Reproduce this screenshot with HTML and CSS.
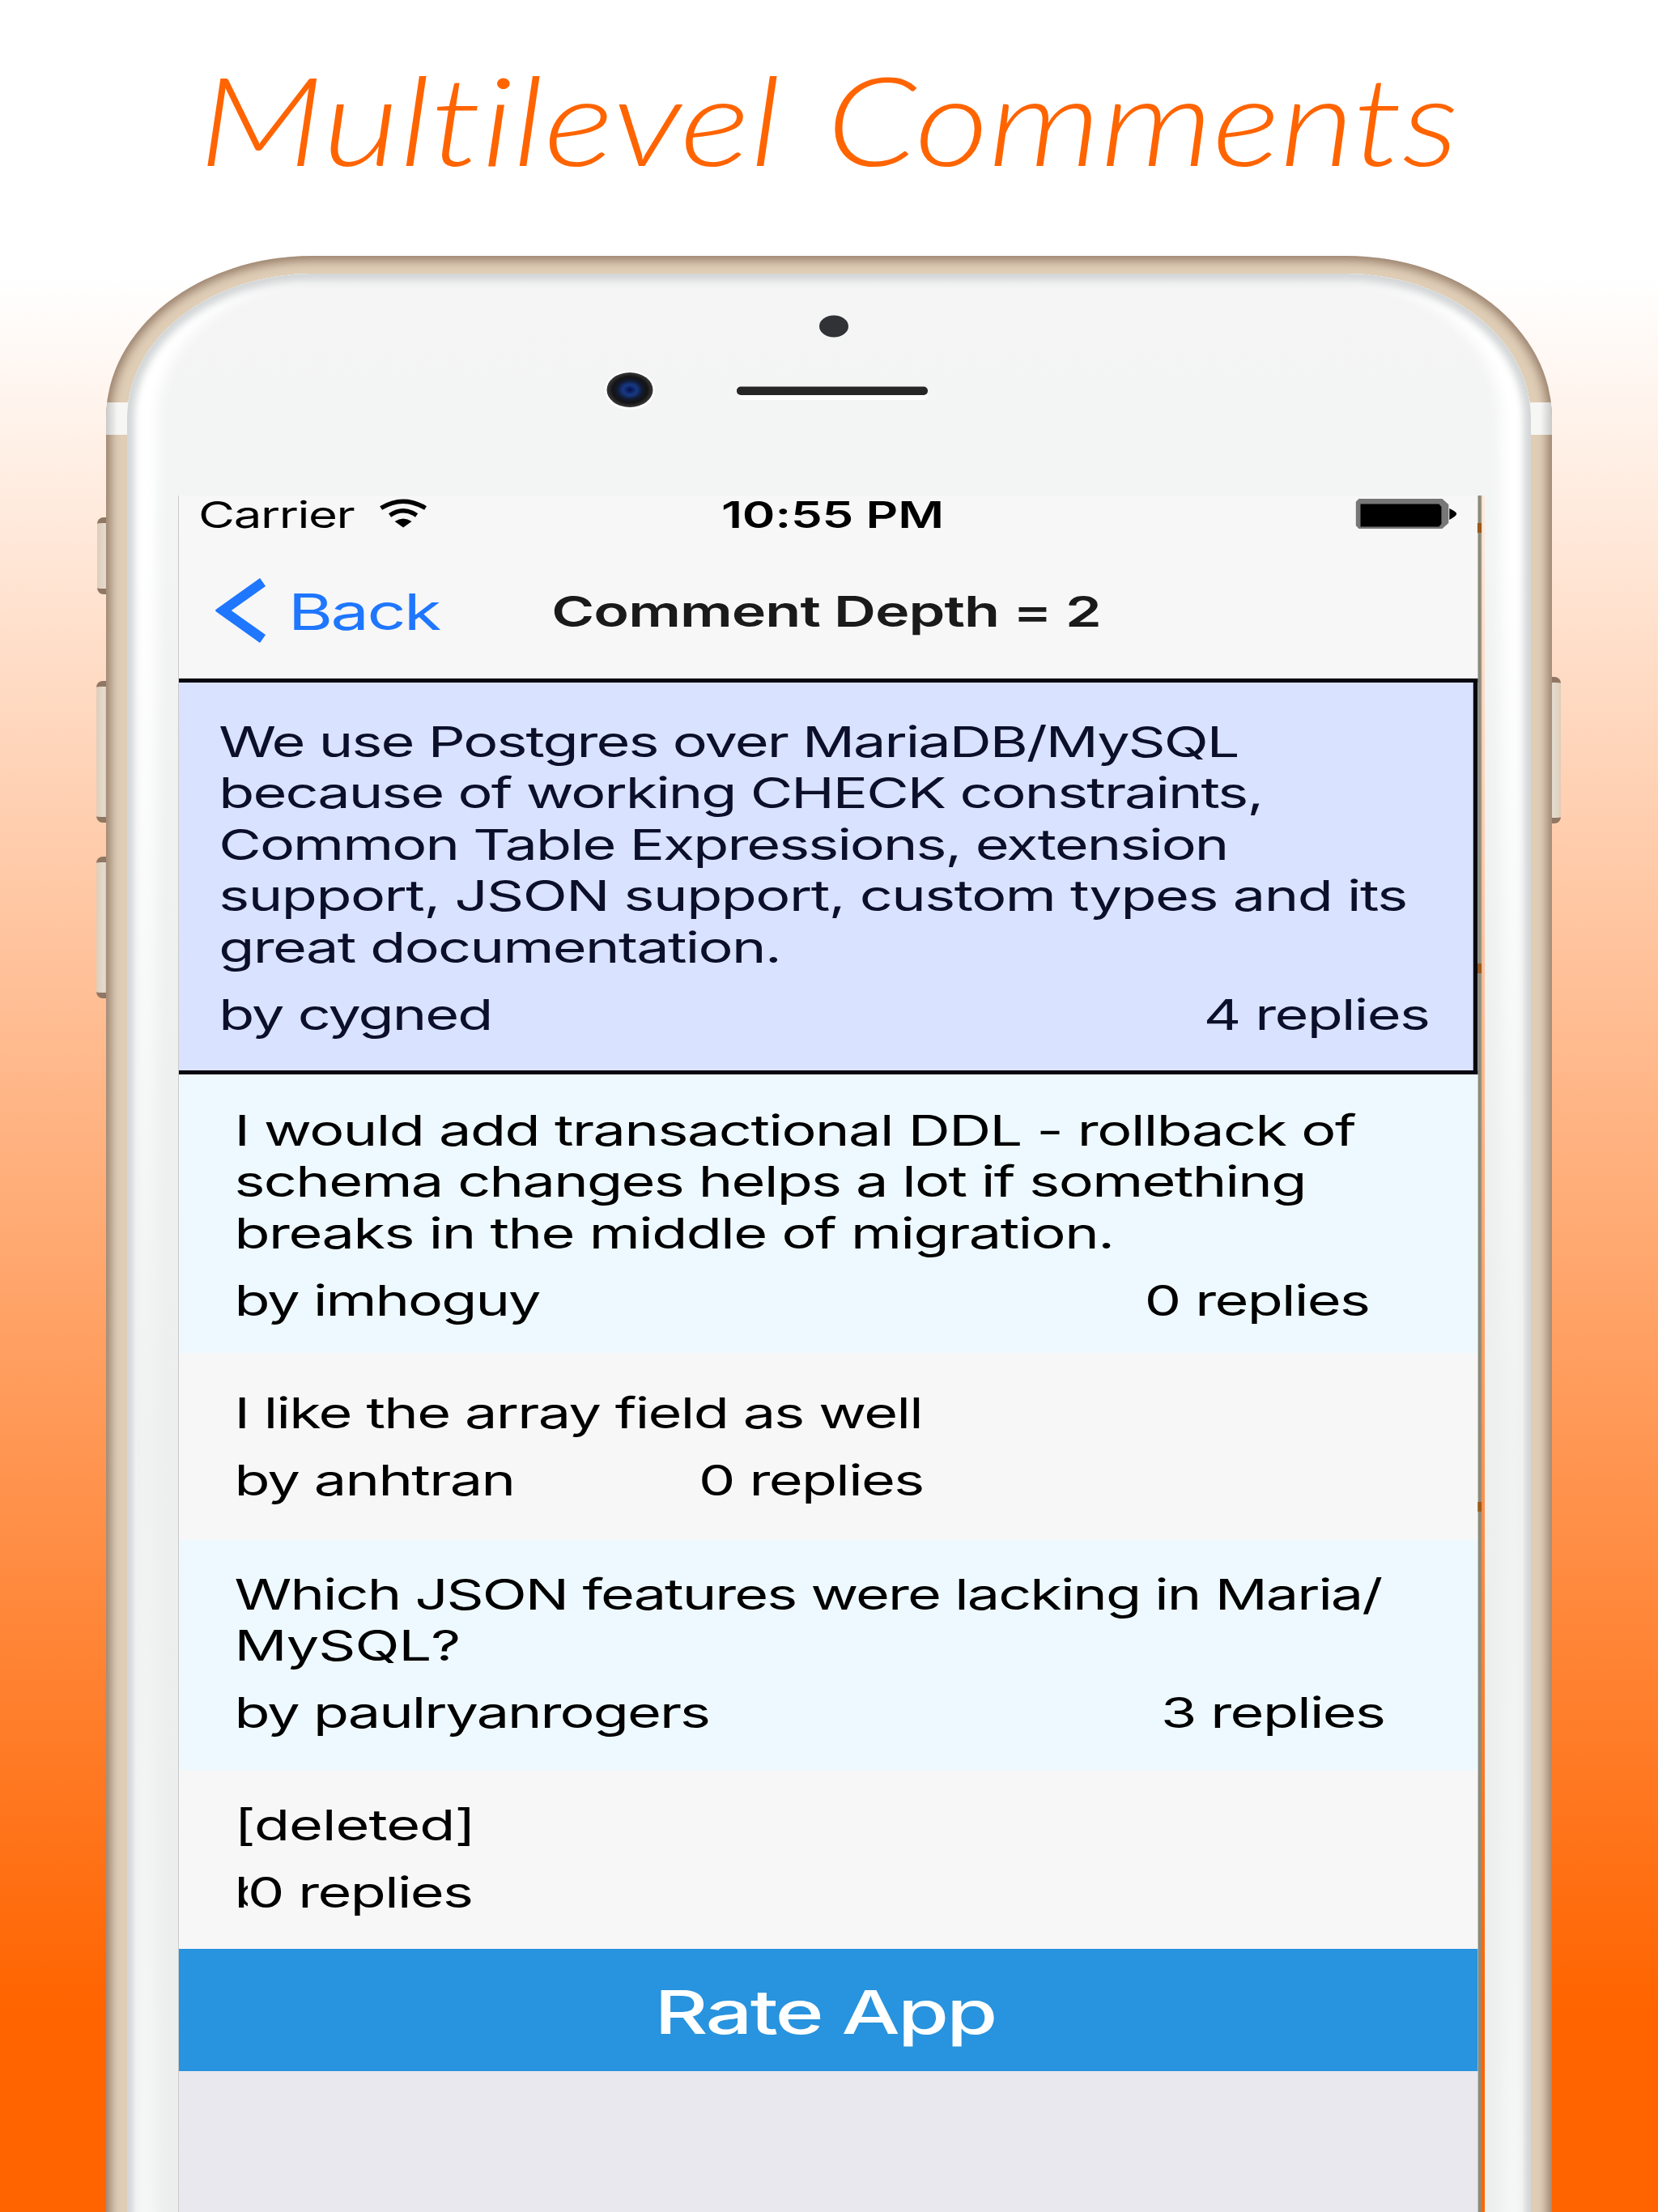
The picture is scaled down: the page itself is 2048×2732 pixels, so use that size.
FILE: index.html
```html
<!DOCTYPE html>
<html lang="en">
<head>
<meta charset="utf-8">
<title>Multilevel Comments</title>
<link rel="stylesheet" href="styles.css">
</head>
<body>
<main class="poster">
  <h1 class="headline"><span class="word word-a">Multilevel</span><span class="word word-b">Comments</span></h1>
  <div class="phone">
    <i class="key key-mute"></i><i class="key key-up"></i><i class="key key-down"></i><i class="key key-power"></i>
    <div class="frame">
      <i class="antenna antenna-left"></i><i class="antenna antenna-right"></i>
      <div class="face">
        <svg class="sensors" viewBox="0 0 500 130">
          <defs>
            <radialGradient id="lens"><stop offset="0" stop-color="#06104a"/><stop offset=".3" stop-color="#173a86"/><stop offset=".55" stop-color="#111a30"/><stop offset=".75" stop-color="#141414"/><stop offset="1" stop-color="#3a3a3a"/></radialGradient>
          </defs>
          <ellipse cx="330" cy="23" rx="18" ry="13.5" fill="#303236"/>
          <ellipse cx="78" cy="102" rx="31" ry="24" fill="#fff"/>
          <ellipse cx="78" cy="101.500" rx="28.500" ry="21.500" fill="url(#lens)"/>
          <rect x="212" y="101" width="234" height="13" rx="5" fill="#fff"/>
          <rect x="210" y="97.500" width="236" height="10.500" rx="5" fill="#262626"/>
        </svg>
        <div class="screen">
          <div class="ui">
            <header class="status">
              <span class="carrier">Carrier</span>
              <svg class="wifi" viewBox="0 0 61 36" preserveAspectRatio="none"><path d="M3 11.500Q30.500-5 58 11.500M14 20.500Q30.500 9 47 20.500" fill="none" stroke="#000" stroke-width="5.500"/><path d="M20 28Q30.500 21 41 28L30.500 35.500Z"/></svg>
              <span class="clock">10:55 PM</span>
              <svg class="battery" viewBox="0 0 126 37" preserveAspectRatio="none"><path d="M4 0H108L116 7V30L108 37H4L0 33V4Z" fill="#777"/><path d="M6 6.500H104L107 10V31L104 34.500H6Z"/><path d="M117 12Q126 16 126 18.500Q126 21 117 26Z"/></svg>
            </header>
            <nav class="navbar">
              <svg class="chevron" viewBox="0 0 64 80" preserveAspectRatio="none"><path d="M58 5L9 40L58 75" fill="none" stroke="#1f76ff" stroke-width="12"/></svg>
              <span class="back">Back</span>
              <span class="nav-title">Comment Depth = 2</span>
            </nav>
            <article class="row parent">
              <p><span class="tight">We use Postgres over MariaDB/MySQL<br>because of working CHECK constraints,<br>Common Table Expressions, extension</span><br><span class="loose">support, JSON support, custom types and its</span><br>great documentation.</p>
              <footer><span class="tight">by cygned</span><span>4 replies</span></footer>
            </article>
            <article class="row tint r2">
              <p class="loose">I would add transactional DDL - rollback of<br><span class="snug">schema changes helps a lot if something</span><br>breaks in the middle of migration.</p>
              <footer><span class="tight">by imhoguy</span><span>0 replies</span></footer>
            </article>
            <article class="row r3">
              <p>I like the array field as well</p>
              <footer><span>by anhtran</span><span>0 replies</span></footer>
            </article>
            <article class="row tint r4">
              <p class="tight">Which JSON features were lacking in Maria/<br><span class="wide">MySQL?</span></p>
              <footer><span class="tight">by paulryanrogers</span><span>3 replies</span></footer>
            </article>
            <article class="row r5">
              <p class="wide">[deleted]</p>
              <footer><span class="cut">by</span><span>0 replies</span></footer>
            </article>
            <div class="rate">Rate App</div>
            <div class="rest"></div>
          </div>
        </div>
      </div>
    </div>
  </div>
</main>
</body>
</html>
```
FILE: styles.css
```css
* { box-sizing: border-box; margin: 0; padding: 0; }
body { width: 2048px; height: 2732px; overflow: hidden; font-family: Inter, "Liberation Sans", sans-serif; }

.poster {
  display: flex;
  flex-direction: column;
  align-items: center;
  width: 2048px;
  height: 2732px;
  overflow: hidden;
  background: linear-gradient(#fff 345px, #ff6400 2480px);
}

/* headline */
.headline {
  display: flex;
  flex: none;
  width: 2048px;
  height: 316px;
  padding: 51px 0 0 245px;
  font: italic 300 152px/190px Lato, sans-serif;
  font-variant-ligatures: none;
  color: #ff6400;
  white-space: nowrap;
}
.word { transform-origin: 0 0; }
.word-a { width: 776px; transform: scaleX(1.21); }
.word-b { width: 780px; transform: scaleX(1.167); }

/* phone shell */
.phone { position: relative; flex: none; width: 1786px; height: 2416px; }
.key {
  position: absolute;
  width: 20px;
  border: solid #8f7763;
  border-width: 7px 0;
  border-radius: 8px 0 0 8px;
  background: linear-gradient(90deg, #e0cdb9, #e4dccf 50%, #a68f7a);
}
.key-mute { left: -11px; top: 323px; height: 95px; }
.key-up { left: -12px; top: 525px; height: 175px; }
.key-down { left: -12px; top: 742px; height: 175px; }
.key-power { right: -11px; top: 520px; height: 181px; transform: scaleX(-1); }

.frame {
  position: relative;
  height: 2500px;
  padding: 22px 26px 0;
  overflow: hidden;
  border-radius: 255px 255px 0 0 / 200px 200px 0 0;
  background: #dfcdb6;
  box-shadow: inset 0 0 12px 6px #9a826e;
}
.antenna { position: absolute; top: 181px; width: 28px; height: 40px; }
.antenna-left { left: 0; background: linear-gradient(90deg, #c9c9c9, #f6f6f4 50%); }
.antenna-right { right: 0; background: linear-gradient(270deg, #c9c9c9, #f6f6f4 50%); }

.face {
  position: relative;
  display: flex;
  flex-direction: column;
  height: 2478px;
  padding-left: 63px;
  border-radius: 229px 229px 0 0 / 178px 178px 0 0;
  background: linear-gradient(#f5f5f5, #f3f4f4 280px, #ebeeed 1900px);
  box-shadow: inset 0 0 10px 9px #d3d6d7, inset 34px 0 16px 3px #fff, inset -34px 0 16px 3px #fff;
}
/* the glass darkens slightly towards the bottom */
.face::after {
  content: "";
  position: absolute;
  inset: 350px 12px 0;
  background: linear-gradient(rgba(236, 239, 238, 0), rgba(236, 239, 238, .8) 1100px, rgba(236, 239, 238, .5));
}
.sensors { width: 500px; height: 130px; margin: 42px 0 0 480px; }
.screen {
  position: relative;
  z-index: 1;
  width: 1614px;
  height: 2140px;
  margin-top: 102px;
  border-left: 1px solid #c9c9c9;
  background:
    linear-gradient(#9a5a1c, #9a5a1c) 1604px 34px / 5px 12px no-repeat,
    linear-gradient(#9a5a1c, #9a5a1c) 1604px 578px / 5px 12px no-repeat,
    linear-gradient(#9a5a1c, #9a5a1c) 1604px 1243px / 5px 12px no-repeat,
    linear-gradient(90deg, #f7f7f7 1604px, #8c8c7c 1605px, #8c8c7c 1608px, rgba(140, 140, 124, 0) 1610px),
    linear-gradient(#fff -267px, #ff6400 1868px);
}

/* app, drawn narrow and stretched across the display */
.ui {
  width: 1171.200px;
  transform: scaleX(1.37);
  transform-origin: 0 0;
  font-size: 52.500px;
  line-height: 63.400px;
  letter-spacing: -1.200px;
  color: #000;
  white-space: nowrap;
}
.tight { letter-spacing: -1.420px; }
.snug { letter-spacing: -1.200px; }
.loose { letter-spacing: -1.080px; }
.wide { letter-spacing: -.700px; }
.status {
  display: flex;
  align-items: flex-start;
  height: 79px;
  padding: 4px 19px 0 17.500px;
  font-size: 45px;
  line-height: 39px;
}
.carrier { width: 162px; letter-spacing: -1px; }
.wifi { width: 44.500px; height: 36px; }
.clock { padding-left: 265px; font-weight: 600; letter-spacing: -.1px; }
.battery { width: 91px; height: 37px; margin-left: auto; }
.navbar { display: flex; align-items: center; height: 147px; padding: 0 0 19px 32.500px; }
.chevron { width: 47px; height: 80px; margin-bottom: 3px; }
.back { width: 256.500px; padding: 1px 0 0 19px; font-size: 61.500px; letter-spacing: -1.800px; color: #1f76ff; }
.nav-title { padding-top: 1px; font-weight: 600; letter-spacing: -.7px; color: #1a1a1a; }

.row { padding-left: 50px; background: #f7f7f7; }
.row footer { display: flex; justify-content: space-between; margin-top: 20px; }
.tint { background: #edf9fe; }
.parent {
  height: 489px;
  padding: 42px 40px 0 36px;
  border: 5px solid #05060f;
  border-left: 0;
  border-right-width: 4px;
  background: #d9e2fe;
  color: #0b0f2a;
}
.r2 { height: 344px; padding-top: 38px; padding-right: 98px; }
.r3 { height: 231px; padding-top: 43px; padding-right: 500px; }
.r4 { height: 284px; padding-top: 36px; padding-right: 84px; }
.r4 footer { margin-top: 19px; }
.r5 { height: 221px; padding-top: 37px; padding-right: 907px; }
.r5 .cut { flex: none; width: 12px; overflow: hidden; }
.rate {
  height: 151px;
  padding: 3px 6px 0 0;
  font-size: 74.500px;
  font-weight: 500;
  line-height: 151px;
  letter-spacing: -2px;
  text-align: center;
  color: #fff;
  background: #2893de;
}
.rest { height: 180px; background: #e9e8ee; }
```
